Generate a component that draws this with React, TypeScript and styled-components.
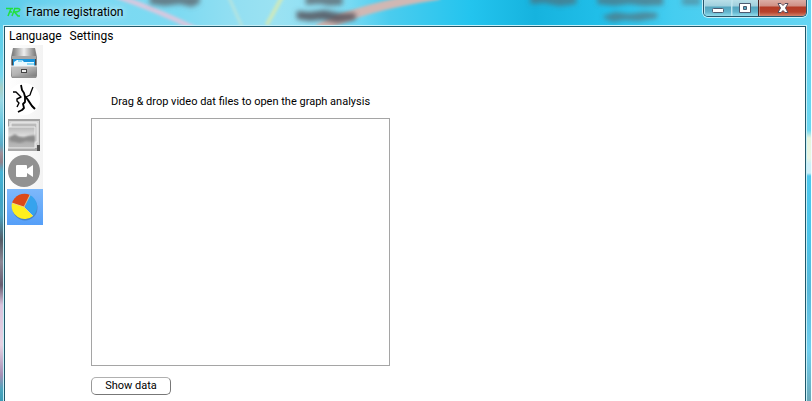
import React from 'react';
import styled, { createGlobalStyle } from 'styled-components';

const GlobalStyle = createGlobalStyle`
  * { box-sizing: border-box; }
  body { margin: 0; background: #fff; overflow: hidden; }
`;

const Window = styled.main`
  position: relative;
  display: flex;
  flex-direction: column;
  min-height: 100vh;
  padding: 0 5px 0 4px;
  border-right: 1px solid #f4fbfd;
  color: #000;
  background:
    linear-gradient(180deg, #62d3ef 0, #6bd7f1 130px, #e5f3dc 138px, #e8f5e3 158px, #cdeff8 164px, #cdeff8 173px, #4cc8ee 176px, #4cc5ea 240px, #58b9da 290px, #70d0f0 350px, #6aa8b8 401px) right / 6px 100% no-repeat,
    linear-gradient(180deg, #5fd0ee 0, #62cfe9 50px, #74d6ee 76px, #a8cfc6 88px, #9ad8e4 100px, #66c6e0 125px, #5baac6 145px, #a08f98 153px, #8f8088 162px, #45b4d6 172px, #3fa6c6 200px, #49a3c0 215px, #555c66 240px, #8c8794 262px, #675d70 285px, #d9c3dc 305px, #e6d2e2 345px, #a58fb4 375px, #4aa5bd 390px, #3b9bb5 401px) left / 5px 100% no-repeat;
`;

const Glass = styled.svg`
  position: absolute;
  inset: 0 0 auto 0;
  width: 100%;
  height: 27px;
`;

const TitleBar = styled.header`
  position: relative;
  display: flex;
  align-items: flex-start;
  height: 26px;
`;

const Title = styled.h1`
  flex: 1;
  display: flex;
  align-items: center;
  gap: 5px;
  height: 24px;
  margin: 0;
  padding-left: 2px;
  font: 400 12px/16px Roboto, 'Open Sans', sans-serif;
  text-shadow: 0 0 6px #ffffffb0, 0 0 10px #ffffff90;
`;

const Controls = styled.div`
  display: flex;
  height: 17px;
  margin-right: -1px;
  border: 1px solid #27566b;
  border-top: 0;
  border-radius: 0 0 5px 5px;
  box-shadow: 0 0 0 1px #c4f0fa;
  overflow: hidden;
`;

const ControlButton = styled.button<{ $close?: boolean }>`
  width: ${p => (p.$close ? 48 : 27)}px;
  height: 16px;
  padding: 0;
  border: 0;
  border-left: ${p => (p.$close ? '1px solid #4d2222' : '1px solid #b9e3ee')};
  background: ${p => p.$close
    ? 'linear-gradient(#dcaea5 0, #cf8f84 6px, #b33a25 7px, #b7422c 12px, #d1826a 16px)'
    : 'linear-gradient(#b9dfe8 0, #9fd0de 6px, #55a5be 7px, #62b5ce 12px, #93dcec 16px)'};
  & + & { box-shadow: inset 1px 0 0 #d8f2f855; }
  svg { display: block; margin: 0 auto; }
`;

const Client = styled.section`
  position: relative;
  flex: 1;
  border: 1px solid #20586a;
  border-bottom: 0;
  box-shadow: 0 0 0 1px #c8f0f8;
  background: #fff;
`;

const MenuBar = styled.nav`
  display: flex;
  height: 18px;
`;

const MenuButton = styled.button`
  padding: 0 4px;
  border: 0;
  background: none;
  color: #000;
  font: 400 12px/18px Roboto, 'Open Sans', sans-serif;
`;

const Body = styled.div`
  display: flex;
  align-items: flex-start;
`;

const ToolBar = styled.div`
  display: flex;
  flex-direction: column;
  width: 36px;
  margin-left: 2px;
  background: linear-gradient(90deg, #fff, #f3f3f3);
`;

const ToolButton = styled.button<{ $active?: boolean }>`
  display: grid;
  place-items: center;
  width: 36px;
  height: 36px;
  padding: 0 2px 0 0;
  border: 0;
  background: ${p => (p.$active ? 'linear-gradient(#7db8fb, #559ff8)' : 'none')};
  svg { display: block; }
`;

const Panel = styled.div`
  display: flex;
  flex-direction: column;
  align-items: flex-start;
  width: 299px;
  margin: 49px 0 0 48px;
`;

const DropLabel = styled.label`
  align-self: center;
  margin-bottom: 8px;
  font: 400 11px/16px Roboto, 'Open Sans', sans-serif;
  white-space: nowrap;
`;

const DropList = styled.select`
  width: 100%;
  height: 248px;
  margin: 0 0 11px;
  border: 1px solid #a5a5a5;
  border-radius: 0;
  background: #fff;
  outline: 0;
`;

const ShowButton = styled.button`
  width: 80px;
  height: 18px;
  padding: 0;
  border: 1px solid #8c8c8c;
  border-color: #b0b0b0 #777 #777 #999;
  border-radius: 5px;
  background: #fff;
  color: #000;
  font: 400 11px/16px Roboto, 'Open Sans', sans-serif;
`;

const GlassBackdrop = () => (
  <Glass viewBox="0 0 812 27" preserveAspectRatio="none" aria-hidden="true">
    <defs>
      <linearGradient id="sky">
        <stop offset="0" stopColor="#5ccbea" />
        <stop offset=".12" stopColor="#7ad9f2" />
        <stop offset=".22" stopColor="#7ddaf2" />
        <stop offset=".29" stopColor="#93dff2" />
        <stop offset=".34" stopColor="#9be2f2" />
        <stop offset=".41" stopColor="#8be0f6" />
        <stop offset=".48" stopColor="#4accee" />
        <stop offset=".58" stopColor="#23c4ee" />
        <stop offset=".66" stopColor="#16b3de" />
        <stop offset=".75" stopColor="#22c0ea" />
        <stop offset=".83" stopColor="#45cdf0" />
        <stop offset="1" stopColor="#65d5f2" />
      </linearGradient>
      <filter id="soft" x="-20%" y="-60%" width="140%" height="220%"><feGaussianBlur stdDeviation="1.6" /></filter>
      <filter id="smudge" x="-20%" y="-80%" width="140%" height="260%"><feGaussianBlur stdDeviation="2.8" /></filter>
    </defs>
    <rect width="812" height="27" fill="url(#sky)" />
    <g filter="url(#soft)" fill="none">
      <path d="M116-4Q155 9 198 30" stroke="#d8c8df" strokeWidth="5" />
      <path d="M229-3L243 28" stroke="#b5e4df" strokeWidth="3" />
      <path d="M283-4L267 25" stroke="#cce9bd" strokeWidth="4" />
      <path d="M318 29Q360 7 440-5" stroke="#d0b8b4" strokeWidth="9" />
    </g>
    <g filter="url(#smudge)" fill="#5c6066">
      <path d="M150-4H200V3L192 7L180 4L165 6L150 4Z" opacity=".75" />
      <path d="M306-4H343V5L330 6L320 4L306 5Z" opacity=".75" />
      <path d="M297 11L310 12L325 10L340 13H356V20L338 23L322 20L310 21L297 19Z" fill="#54525a" opacity=".85" />
      <path d="M531-4H577V4L560 6L545 3L531 4Z" opacity=".6" />
      <path d="M598-4H664V5L645 6L630 4L615 6L598 4Z" opacity=".6" />
      <path d="M604 16L616 12L630 14L645 12L658 13V18L640 21L625 20L614 22L604 18Z" opacity=".6" />
      <rect x="683" y="-3" width="18" height="8" opacity=".45" />
    </g>
  </Glass>
);

const AppLogo = () => (
  <svg width="15" height="10" viewBox="0 0 15 10" fill="none" stroke="#22df3c" strokeWidth="1.5">
    <path d="M0 1.5H7M5 1.5L2 9M3 5H6M9 1L6 9M8 1.5H12Q15 2 13 4Q12 5 8.500 5L12 9H14" />
  </svg>
);

const CabinetIcon = () => (
  <svg width="28" height="32" viewBox="0 0 28 32">
    <defs>
      <linearGradient id="metal" x2="1"><stop stopColor="#777" /><stop offset=".5" stopColor="#eee" /><stop offset="1" stopColor="#777" /></linearGradient>
      <linearGradient id="drawer" x2="1" y2="1"><stop stopColor="#c8c8c8" /><stop offset=".45" stopColor="#b4b4b4" /><stop offset="1" stopColor="#777" /></linearGradient>
    </defs>
    <path d="M3 1H25L27 10V29L26 31H2L1 29V10Z" fill="#888" />
    <path d="M4 1H24L26 9H2Z" fill="url(#metal)" />
    <path d="M2 9H26V12H2Z" fill="#a5a5a5" />
    <path d="M2 12H26V19H2Z" fill="#454545" />
    <path d="M3 12H25V20H3Z" fill="#1794dc" />
    <path d="M4 15L7 13H12L14 15H24V19H4Z" fill="#e8faff" />
    <path d="M8 14H12M17 17H24" stroke="#35b9ed" />
    <path d="M1 19H27L26 30H2Z" fill="url(#drawer)" />
    <path d="M1 19H27" stroke="#f4f4f4" />
    <path d="M11 22H17V26H11Z" fill="#444" />
    <path d="M12 23H16V25H12Z" fill="#eee" />
    <path d="M2 30H26" stroke="#999" />
  </svg>
);

const BranchIcon = () => (
  <svg width="32" height="32" viewBox="0 0 32 32">
    <circle cx="16" cy="16" r="16" fill="#fff" />
    <g fill="none" stroke="#000" strokeLinejoin="round">
      <path d="M13 2L14 7L16 10L17 14V19L15 21L16 25L14 27L10 29" strokeWidth="1.8" />
      <path d="M17 13L20 17L22 20L24 23L27 26" strokeWidth="2" />
      <path d="M18 14L22 12L23 9L25 4" strokeWidth="1.3" />
      <path d="M5 9L8 9L10 11L13 14L9 16L9 18L11 20L9 24" strokeWidth="1.4" />
    </g>
  </svg>
);

const PicturesIcon = () => (
  <svg width="32" height="32" viewBox="0 0 32 32">
    <defs>
      <linearGradient id="photo" y2="1" x2="0"><stop stopColor="#b8b8b8" /><stop offset=".4" stopColor="#ddd" /><stop offset=".55" stopColor="#aaa" /><stop offset="1" stopColor="#bbb" /></linearGradient>
      <filter id="photoSoft"><feGaussianBlur stdDeviation="1" /></filter>
    </defs>
    <path d="M0 0H32V32H0Z" fill="#a2a2a2" />
    <path d="M1 2H31V29H1Z" fill="#d5d5d5" />
    <path d="M3 4H29V23H3Z" fill="#bbb" stroke="#eee" />
    <path d="M0 8H27V29H0Z" fill="url(#photo)" stroke="#eee" />
    <path d="M2 18L7 15L11 18L16 19L20 17L27 16V23L18 22L12 24L2 22Z" fill="#8c8c8c" filter="url(#photoSoft)" />
    <path d="M0 30H29V32H0Z" fill="#a8a8a8" />
    <path d="M29 26H32V32H29Z" fill="#555" />
  </svg>
);

const CameraIcon = () => (
  <svg width="32" height="32" viewBox="0 0 32 32">
    <circle cx="16" cy="16" r="16" fill="#929292" />
    <path d="M9 10H18Q19 10 19 11V14L25 10V22L19 18V21Q19 22 18 22H9Q8 22 8 21V11Q8 10 9 10Z" fill="#fff" />
  </svg>
);

const PieIcon = () => (
  <svg width="28" height="28" viewBox="0 0 28 28">
    <circle cx="15" cy="15" r="12.500" fill="#336aa5" opacity=".55" />
    <path d="M14 14L2 10A13 13 0 0 1 20 2Z" fill="#dc4a18" />
    <path d="M15 14L20 2A13 13 0 0 1 23 23Z" fill="#36a3ed" />
    <path d="M14 14L23 23A13 13 0 0 1 2 10Z" fill="#fff01f" />
    <path d="M2 10L14 14L20 2M14 14L23 23" fill="none" stroke="#f3d893" strokeWidth=".8" />
  </svg>
);

const tools = [
  { name: 'Open files', Icon: CabinetIcon },
  { name: 'Branches', Icon: BranchIcon },
  { name: 'Pictures', Icon: PicturesIcon },
  { name: 'Video', Icon: CameraIcon },
  { name: 'Graph analysis', Icon: PieIcon, active: true },
];

export default function App() {
  return (
    <Window>
      <GlobalStyle />
      <GlassBackdrop />
      <TitleBar>
        <Title><AppLogo />Frame registration</Title>
        <Controls>
          <ControlButton aria-label="Minimize">
            <svg width="14" height="13" viewBox="0 0 14 13"><rect x="1.500" y="6.500" width="11" height="4" rx="1" fill="#fff" stroke="#4c5a70" /></svg>
          </ControlButton>
          <ControlButton aria-label="Maximize">
            <svg width="14" height="13" viewBox="0 0 14 13"><path d="M1.500 1.500H12.500V10.500H1.500ZM5.500 4.500V7.500H8.500V4.500Z" fill="#fff" fillRule="evenodd" stroke="#4c5a70" /></svg>
          </ControlButton>
          <ControlButton $close aria-label="Close">
            <svg width="14" height="13" viewBox="0 0 14 13"><path d="M2 1.500H5L7 3.500L9 1.500H12L9.500 6L12 10.500H9L7 8.500L5 10.500H2L4.500 6Z" fill="#fff" stroke="#554c5c" /></svg>
          </ControlButton>
        </Controls>
      </TitleBar>
      <Client>
        <MenuBar>
          <MenuButton>Language</MenuButton>
          <MenuButton>Settings</MenuButton>
        </MenuBar>
        <Body>
          <ToolBar role="toolbar" aria-label="Tools">
            {tools.map(({ name, Icon, active }) => (
              <ToolButton key={name} $active={active} aria-label={name} aria-pressed={!!active}><Icon /></ToolButton>
            ))}
          </ToolBar>
          <Panel>
            <DropLabel htmlFor="files">Drag &amp; drop video dat files to open the graph analysis</DropLabel>
            <DropList id="files" size={10} />
            <ShowButton>Show data</ShowButton>
          </Panel>
        </Body>
      </Client>
    </Window>
  );
}
